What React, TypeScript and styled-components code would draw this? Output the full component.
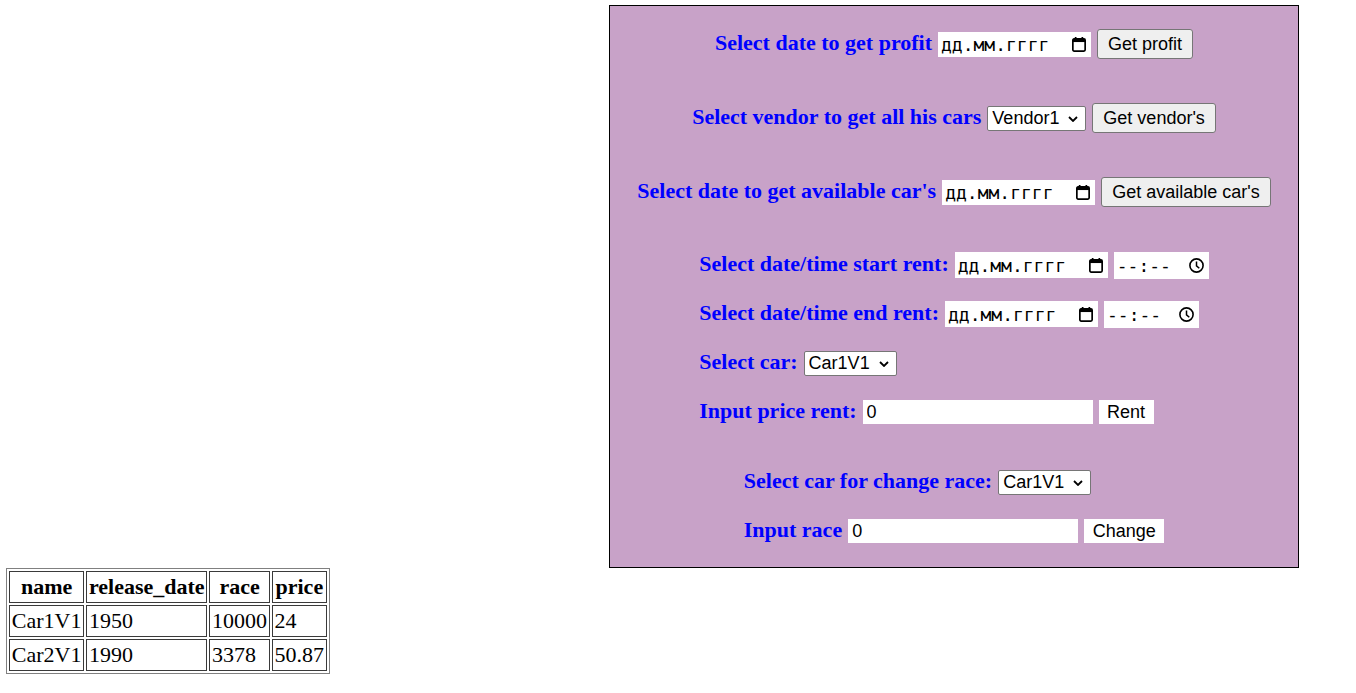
import React from 'react';
import styled, { createGlobalStyle } from 'styled-components';

const GlobalStyle = createGlobalStyle`
  html, body { margin: 0; padding: 0; background: #ffffff; }
  body { font-family: "Liberation Serif", "Times New Roman", serif; color: #000; }
`;

const Page = styled.div`
  display: flex;
  flex-direction: column;
  align-items: flex-start;
  padding-top: 5px;
`;

const Panel = styled.div`
  box-sizing: border-box;
  width: 690px;
  margin-left: 609px;
  border: 1px solid #000;
  background: #c8a2c8;
  padding: 22px 0 20px;
  display: flex;
  flex-direction: column;
  align-items: center;
`;

const Section = styled.div<{ $gap: number; $top?: number; $align: 'center' | 'flex-start' }>`
  display: flex;
  flex-direction: column;
  align-items: ${(p) => p.$align};
  gap: ${(p) => p.$gap}px;
  margin-top: ${(p) => p.$top ?? 0}px;
`;

const Row = styled.div`
  display: flex;
  align-items: center;
  gap: 6px;
  height: 32px;
`;

const Label = styled.span`
  font: bold 22px "Liberation Serif", "Times New Roman", serif;
  color: #0000ff;
  white-space: nowrap;
  padding-bottom: 2px;
`;

const DateField = styled.div<{ $h?: number; $w?: number }>`
  box-sizing: border-box;
  width: ${(p) => p.$w ?? 153}px;
  height: ${(p) => p.$h ?? 25}px;
  background: #fff;
  display: flex;
  align-items: center;
  justify-content: space-between;
  padding: 0 5px 0 3px;
  font: 18px "DejaVu Sans Mono", "Liberation Mono", monospace;
  color: #000;
  white-space: nowrap;
`;

const Button = styled.button`
  box-sizing: border-box;
  height: 30px;
  padding: 0 10px;
  background: #efefef;
  border: 1px solid #767676;
  border-radius: 3px;
  font: 18px "Liberation Sans", Arial, sans-serif;
  color: #000;
  white-space: nowrap;
`;

const FlatButton = styled.button`
  box-sizing: border-box;
  height: 24px;
  padding: 0 8.5px;
  background: #fff;
  border: none;
  font: 18px "Liberation Sans", Arial, sans-serif;
  color: #000;
`;

const TextInput = styled.input`
  box-sizing: border-box;
  width: 230px;
  height: 24px;
  padding: 0 4px;
  border: none;
  outline: none;
  background: #fff;
  font: 18px "Liberation Sans", Arial, sans-serif;
  color: #000;
`;

const SelectWrap = styled.div`
  position: relative;
  display: inline-flex;
`;

const Select = styled.select`
  box-sizing: border-box;
  appearance: none;
  -webkit-appearance: none;
  height: 25px;
  padding: 0 25px 0 4px;
  border: 1px solid #767676;
  border-radius: 2px;
  background: #fff;
  font: 18px "Liberation Sans", Arial, sans-serif;
  color: #000;
`;

const Chevron = styled.svg`
  position: absolute;
  right: 8px;
  top: 10px;
  pointer-events: none;
`;

const Table = styled.table`
  margin-left: 6px;
  border: 1px solid #808080;
  border-spacing: 2px;
  font: 22px "Liberation Serif", "Times New Roman", serif;
`;

const Th = styled.th`
  border: 1px solid #3a3a3a;
  padding: 2px 1.75px;
  font-weight: bold;
  text-align: center;
`;

const Td = styled.td`
  border: 1px solid #3a3a3a;
  padding: 2px 1.75px;
  text-align: left;
`;

const CalendarIcon = () => (
  <svg width="14" height="15" viewBox="0 0 14 15">
    <rect x="2.8" y="0" width="1.7" height="3" fill="#000" />
    <rect x="9.5" y="0" width="1.7" height="3" fill="#000" />
    <rect x="0.85" y="1.85" width="12.3" height="12.3" rx="1.3" fill="none" stroke="#000" strokeWidth="1.7" />
    <rect x="0.85" y="1.85" width="12.3" height="3.2" fill="#000" />
  </svg>
);

const ClockIcon = () => (
  <svg width="15" height="15" viewBox="0 0 15 15">
    <circle cx="7.5" cy="7.5" r="6.6" fill="none" stroke="#000" strokeWidth="1.6" />
    <polyline points="7.5,3.6 7.5,7.8 10.3,10.2" fill="none" stroke="#000" strokeWidth="1.5" />
  </svg>
);

const DateInput = ({ h, w }: { h?: number; w?: number }) => (
  <DateField $h={h} $w={w}>
    <span>дд.мм.гггг</span>
    <CalendarIcon />
  </DateField>
);

const TimeInput = () => (
  <DateField $h={27} $w={95}>
    <span>--:--</span>
    <ClockIcon />
  </DateField>
);

const SelectBox = ({ value }: { value: string }) => (
  <SelectWrap>
    <Select defaultValue={value}>
      <option value={value}>{value}</option>
    </Select>
    <Chevron width="10" height="6" viewBox="0 0 10 6">
      <polyline points="1,1 5,5 9,1" fill="none" stroke="#000" strokeWidth="1.8" />
    </Chevron>
  </SelectWrap>
);

const rows = [
  { name: 'Car1V1', date: '1950', race: '10000', price: '24' },
  { name: 'Car2V1', date: '1990', race: '3378', price: '50.87' },
];

export default function App() {
  return (
    <>
      <GlobalStyle />
      <Page>
        <Panel>
          <Section $gap={42} $align="center">
            <Row>
              <Label>Select date to get profit</Label>
              <DateInput />
              <Button>Get profit</Button>
            </Row>
            <Row>
              <Label>Select vendor to get all his cars</Label>
              <SelectBox value="Vendor1" />
              <Button>Get vendor's</Button>
            </Row>
            <Row>
              <Label>Select date to get available car's</Label>
              <DateInput />
              <Button>Get available car's</Button>
            </Row>
          </Section>
          <Section $gap={17} $top={41} $align="flex-start">
            <Row>
              <Label>Select date/time start rent:</Label>
              <DateInput h={26} />
              <TimeInput />
            </Row>
            <Row>
              <Label>Select date/time end rent:</Label>
              <DateInput h={26} />
              <TimeInput />
            </Row>
            <Row>
              <Label>Select car:</Label>
              <SelectBox value="Car1V1" />
            </Row>
            <Row>
              <Label>Input price rent:</Label>
              <TextInput defaultValue="0" />
              <FlatButton>Rent</FlatButton>
            </Row>
          </Section>
          <Section $gap={17} $top={38} $align="flex-start">
            <Row>
              <Label>Select car for change race:</Label>
              <SelectBox value="Car1V1" />
            </Row>
            <Row>
              <Label>Input race</Label>
              <TextInput defaultValue="0" />
              <FlatButton>Change</FlatButton>
            </Row>
          </Section>
        </Panel>
        <Table>
          <thead>
            <tr>
              <Th>name</Th>
              <Th>release_date</Th>
              <Th>race</Th>
              <Th>price</Th>
            </tr>
          </thead>
          <tbody>
            {rows.map((r) => (
              <tr key={r.name}>
                <Td>{r.name}</Td>
                <Td>{r.date}</Td>
                <Td>{r.race}</Td>
                <Td>{r.price}</Td>
              </tr>
            ))}
          </tbody>
        </Table>
      </Page>
    </>
  );
}
